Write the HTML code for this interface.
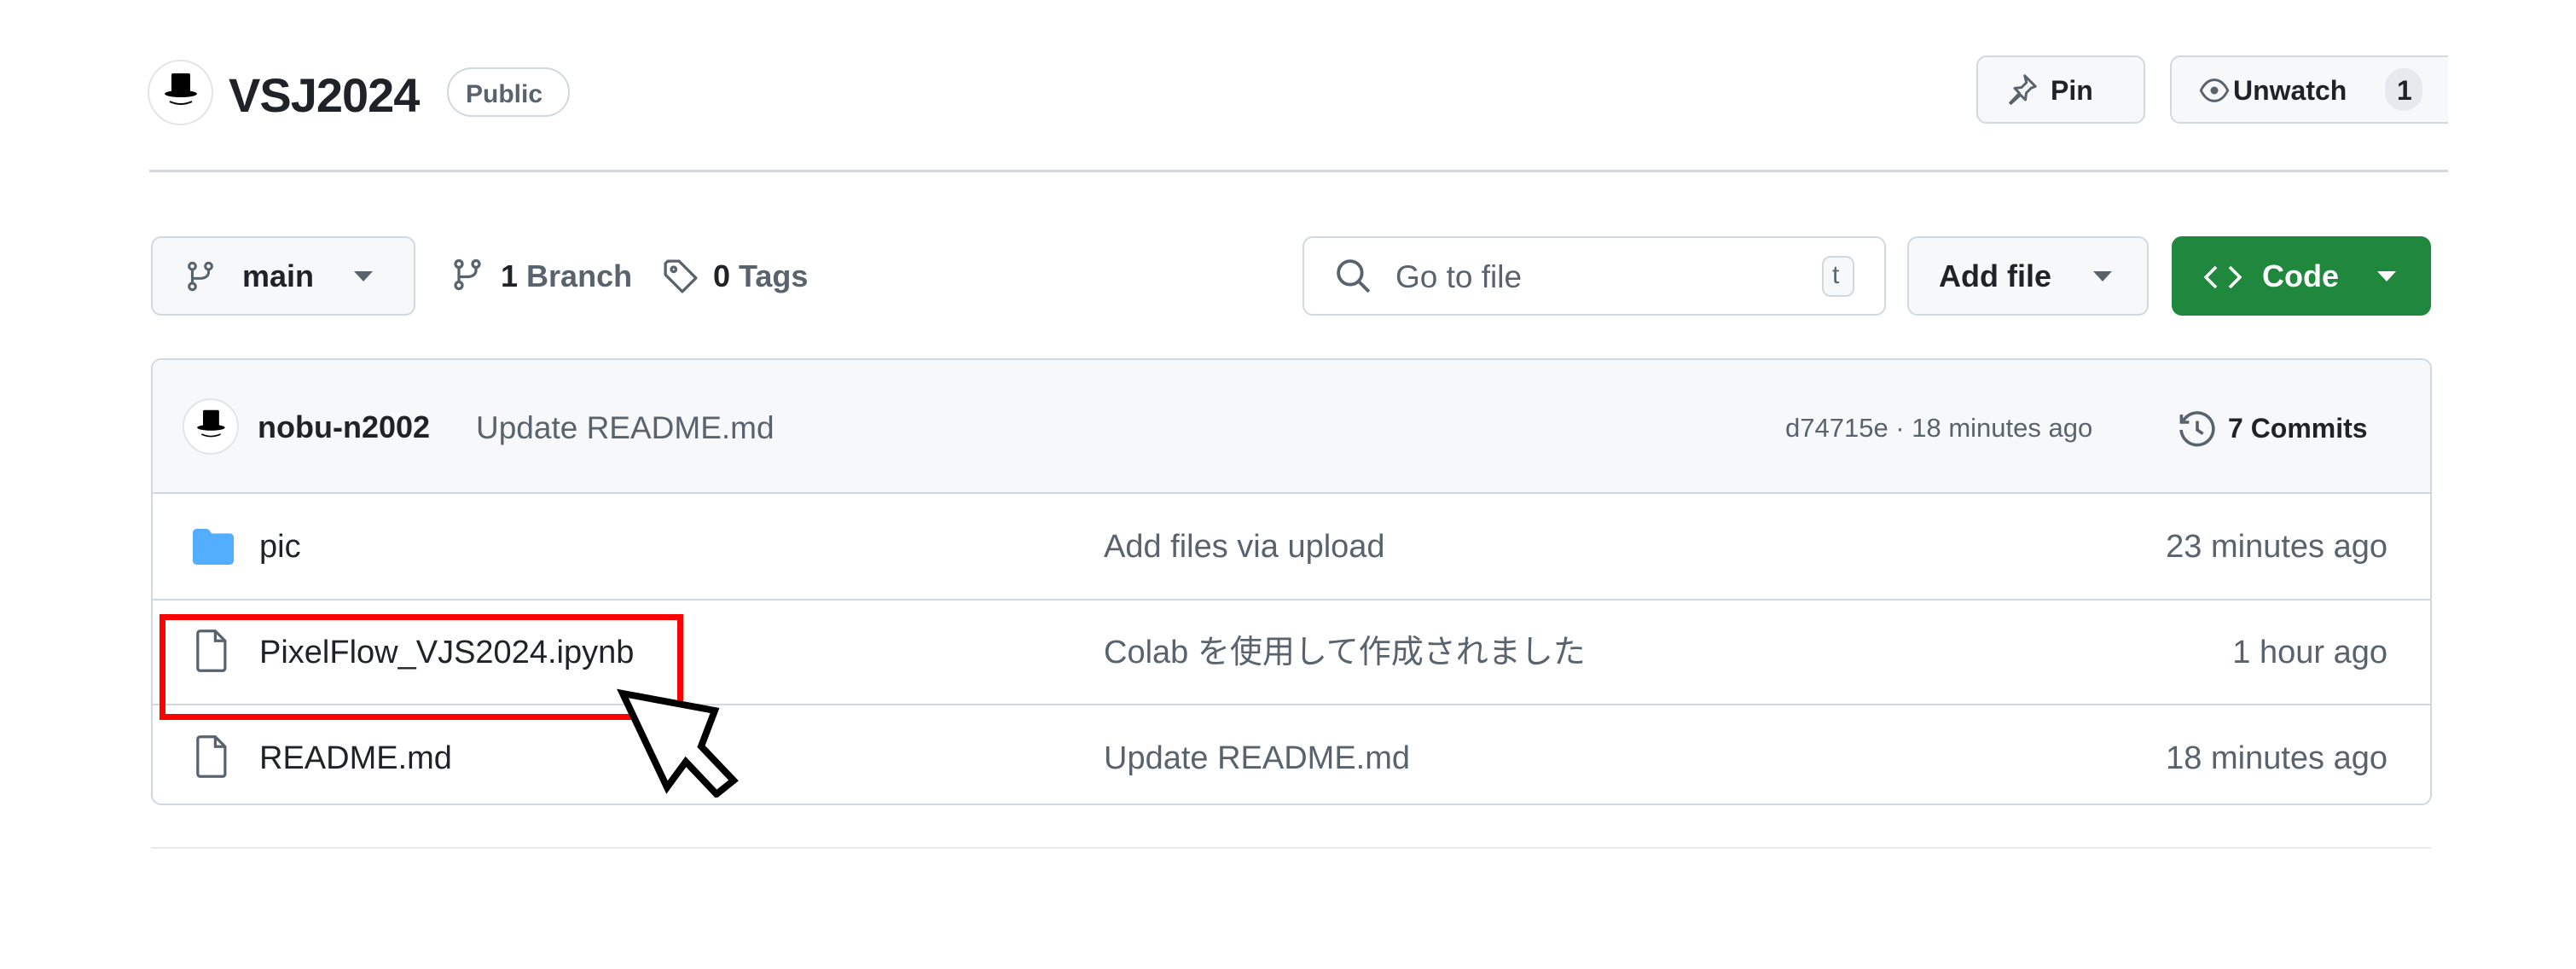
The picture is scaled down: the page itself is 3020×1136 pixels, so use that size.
<!DOCTYPE html>
<html><head><meta charset="utf-8"><style>
*{margin:0;padding:0;box-sizing:border-box}
body{width:3020px;height:1136px;background:#fff;position:relative;overflow:hidden;font-family:"Liberation Sans","Noto Sans CJK JP",sans-serif;color:#1f2328}
.a{position:absolute}
.btn{position:absolute;background:#f6f8fa;border:2px solid #d1d9e0;border-radius:12px}
.t{position:absolute;white-space:nowrap;line-height:1}
.g{color:#59636e}
.hl{position:absolute;height:2px;background:#d1d9e0}
</style></head><body>

<!-- avatar -->
<div class="a" style="left:173px;top:70px;width:77px;height:77px;border-radius:50%;border:2px solid #e2e5e8;background:#fff"></div>
<svg class="a" style="left:173px;top:70px" width="77" height="77" viewBox="0 0 77 77">
<rect x="28" y="16" width="22" height="22" rx="2" fill="#000"/><ellipse cx="39" cy="40" rx="19" ry="4" fill="#000"/>
<path d="M26 49 q13 6 26 0" stroke="#000" stroke-width="2" fill="none"/></svg>
<div class="t" style="left:268px;top:84px;font-size:56px;font-weight:bold;letter-spacing:-1px">VSJ2024</div>
<div class="a" style="left:524px;top:79px;width:144px;height:58px;border:2px solid #d1d9e0;border-radius:29px"></div>
<div class="t g" style="left:546px;top:96px;font-size:30px;font-weight:bold">Public</div>

<!-- Pin / Unwatch -->
<div class="btn" style="left:2317px;top:65px;width:198px;height:80px"></div>
<svg class="a" style="left:2350px;top:85px" width="40" height="40" viewBox="0 0 16 16"><path d="M9.5 1.5l5 5-2 .8-2.3 2.3-.4 3.2-2.3-2.3L3 14.5l-.3-.3 4.3-4.5L4.8 7.4l3.2-.4L10.3 4.7z" fill="none" stroke="#59636e" stroke-width="1.2" stroke-linejoin="round"/></svg>
<div class="t" style="left:2404px;top:90px;font-size:32px;font-weight:bold">Pin</div>
<div class="a" style="left:2544px;top:60px;width:326px;height:90px;overflow:hidden">
<div class="btn" style="left:0;top:5px;width:360px;height:80px"></div>
<svg class="a" style="left:34px;top:28px" width="36" height="36" viewBox="0 0 16 16"><path d="M1 8c2-4 4.5-5.5 7-5.5S13 4 15 8c-2 4-4.5 5.5-7 5.5S3 12 1 8z" fill="none" stroke="#59636e" stroke-width="1.3"/><circle cx="8" cy="8" r="2" fill="#59636e"/></svg>
<div class="t" style="left:74px;top:30px;font-size:32px;font-weight:bold">Unwatch</div>
<div class="a" style="left:252px;top:20px;width:44px;height:50px;border-radius:22px;background:#e6eaef"></div>
<div class="t" style="left:266px;top:30px;font-size:32px;font-weight:bold">1</div>
</div>

<div class="hl" style="left:175px;top:199px;width:2695px;height:3px"></div>

<!-- branch row -->
<div class="btn" style="left:177px;top:277px;width:310px;height:93px"></div>
<svg class="a" style="left:216px;top:305px" width="38" height="38" viewBox="0 0 16 16" fill="none" stroke="#59636e" stroke-width="1.3"><circle cx="4" cy="3" r="1.6"/><circle cx="4" cy="13" r="1.6"/><circle cx="12" cy="3" r="1.6"/><path d="M4 4.6v6.8M12 4.6v1.4c0 2-2 3-4 3H4"/></svg>
<div class="t" style="left:284px;top:306px;font-size:36px;font-weight:bold">main</div>
<svg class="a" style="left:415px;top:318px" width="22" height="14"><path d="M0 0h22L11 12z" fill="#59636e"/></svg>
<svg class="a" style="left:528px;top:302px" width="40" height="40" viewBox="0 0 16 16" fill="none" stroke="#59636e" stroke-width="1.3"><circle cx="4" cy="3" r="1.6"/><circle cx="4" cy="13" r="1.6"/><circle cx="12" cy="3" r="1.6"/><path d="M4 4.6v6.8M12 4.6v1.4c0 2-2 3-4 3H4"/></svg>
<div class="t" style="left:587px;top:306px;font-size:36px;font-weight:bold"><span>1</span> <span class="g">Branch</span></div>
<svg class="a" style="left:776px;top:302px" width="44" height="44" viewBox="0 0 16 16" fill="none" stroke="#59636e" stroke-width="1.2"><path d="M1.5 2.5v4.8l7.2 7.2 5.8-5.8-7.2-7.2H2.5z" stroke-linejoin="round"/><circle cx="5" cy="5" r="1"/></svg>
<div class="t" style="left:836px;top:306px;font-size:36px;font-weight:bold"><span>0</span> <span class="g">Tags</span></div>

<div class="a" style="left:1527px;top:277px;width:684px;height:93px;border:2px solid #d1d9e0;border-radius:12px;background:#fff"></div>
<svg class="a" style="left:1565px;top:302px" width="44" height="44" viewBox="0 0 16 16" fill="none" stroke="#59636e" stroke-width="1.4"><circle cx="6.5" cy="6.5" r="5"/><path d="M10 10l4.5 4.5"/></svg>
<div class="t g" style="left:1636px;top:306px;font-size:37px">Go to file</div>
<div class="a" style="left:2136px;top:300px;width:38px;height:48px;border:2px solid #d1d9e0;border-radius:10px;background:#f6f8fa"></div>
<div class="t g" style="left:2148px;top:308px;font-size:30px">t</div>
<div class="btn" style="left:2236px;top:277px;width:283px;height:93px"></div>
<div class="t" style="left:2273px;top:306px;font-size:36px;font-weight:bold">Add file</div>
<svg class="a" style="left:2454px;top:318px" width="22" height="14"><path d="M0 0h22L11 12z" fill="#59636e"/></svg>
<div class="a" style="left:2546px;top:277px;width:304px;height:93px;border-radius:12px;background:#1f883d"></div>
<svg class="a" style="left:2584px;top:308px" width="44" height="34" viewBox="0 0 22 16" fill="none" stroke="#fff" stroke-width="1.8"><path d="M7 2L1 8l6 6M15 2l6 6-6 6"/></svg>
<div class="t" style="left:2652px;top:306px;font-size:36px;font-weight:bold;color:#fff">Code</div>
<svg class="a" style="left:2787px;top:318px" width="22" height="14"><path d="M0 0h22L11 12z" fill="#fff"/></svg>

<!-- table -->
<div class="a" style="left:177px;top:420px;width:2674px;height:524px;border:2px solid #d1d9e0;border-radius:12px;overflow:hidden">
 <div class="a" style="left:0;top:0;width:100%;height:157px;background:#f6f8fa;border-bottom:2px solid #d1d9e0"></div>
 <div class="a" style="left:0;top:280px;width:100%;height:2px;background:#d1d9e0"></div>
 <div class="a" style="left:0;top:403px;width:100%;height:2px;background:#d1d9e0"></div>
</div>
<div class="a" style="left:214px;top:467px;width:66px;height:66px;border-radius:50%;border:2px solid #e2e5e8;background:#fff"></div>
<svg class="a" style="left:214px;top:467px" width="66" height="66" viewBox="0 0 77 77"><rect x="28" y="16" width="22" height="22" rx="2" fill="#000"/><ellipse cx="39" cy="40" rx="19" ry="4" fill="#000"/><path d="M26 49 q13 6 26 0" stroke="#000" stroke-width="2" fill="none"/></svg>
<div class="t" style="left:302px;top:483px;font-size:36px;font-weight:bold">nobu-n2002</div>
<div class="t g" style="left:558px;top:483px;font-size:37px">Update README.md</div>
<div class="t g" style="left:2093px;top:486px;font-size:31px">d74715e · 18 minutes ago</div>
<svg class="a" style="left:2552px;top:480px" width="48" height="48" viewBox="0 0 16 16" fill="none" stroke="#59636e" stroke-width="1.2"><path d="M2.5 4.5A6.3 6.3 0 1 1 1.7 8"/><path d="M1.8 2v3h3"/><path d="M8 4.5V8l2.2 1.5"/></svg>
<div class="t" style="left:2612px;top:486px;font-size:32px;font-weight:bold">7 Commits</div>

<!-- rows -->
<svg class="a" style="left:226px;top:620px" width="48" height="42" viewBox="0 0 16 14"><path d="M0 1.5C0 .7.7 0 1.5 0h3.8c.5 0 .9.2 1.2.6l.9 1.2H14.5c.8 0 1.5.7 1.5 1.5v9.2c0 .8-.7 1.5-1.5 1.5h-13C.7 14 0 13.3 0 12.5z" fill="#54aeff"/></svg>
<div class="t" style="left:304px;top:622px;font-size:38px">pic</div>
<div class="t g" style="left:1294px;top:622px;font-size:38px">Add files via upload</div>
<div class="t g" style="left:2400px;top:622px;width:399px;text-align:right;font-size:38px">23 minutes ago</div>

<svg class="a" style="left:230px;top:738px" width="36" height="50" viewBox="0 0 12 17" fill="none" stroke="#59636e" stroke-width="1.1"><path d="M1.5.6h6l3.9 3.9v10.9c0 .6-.4 1-1 1H1.5c-.6 0-1-.4-1-1V1.6c0-.6.4-1 1-1zM7.5.6v3.9h3.9"/></svg>
<div class="t" style="left:304px;top:746px;font-size:38px">PixelFlow_VJS2024.ipynb</div>
<div class="t g" style="left:1294px;top:746px;font-size:38px">Colab を使用して作成されました</div>
<div class="t g" style="left:2400px;top:746px;width:399px;text-align:right;font-size:38px">1 hour ago</div>

<svg class="a" style="left:230px;top:862px" width="36" height="50" viewBox="0 0 12 17" fill="none" stroke="#59636e" stroke-width="1.1"><path d="M1.5.6h6l3.9 3.9v10.9c0 .6-.4 1-1 1H1.5c-.6 0-1-.4-1-1V1.6c0-.6.4-1 1-1zM7.5.6v3.9h3.9"/></svg>
<div class="t" style="left:304px;top:870px;font-size:38px">README.md</div>
<div class="t g" style="left:1294px;top:870px;font-size:38px">Update README.md</div>
<div class="t g" style="left:2400px;top:870px;width:399px;text-align:right;font-size:38px">18 minutes ago</div>

<div class="hl" style="left:177px;top:993px;width:2673px;background:#e8ebee"></div>

<!-- red box & cursor -->
<div class="a" style="left:187px;top:720px;width:614px;height:124px;border:7px solid #ff0000"></div>
<svg class="a" style="left:720px;top:805px" width="170" height="130" viewBox="0 0 170 130"><path d="M10 8L118 28 102 70 140 110 120 126 84 88 62 118z" fill="#fff" stroke="#000" stroke-width="8" stroke-linejoin="miter"/></svg>
</body></html>
